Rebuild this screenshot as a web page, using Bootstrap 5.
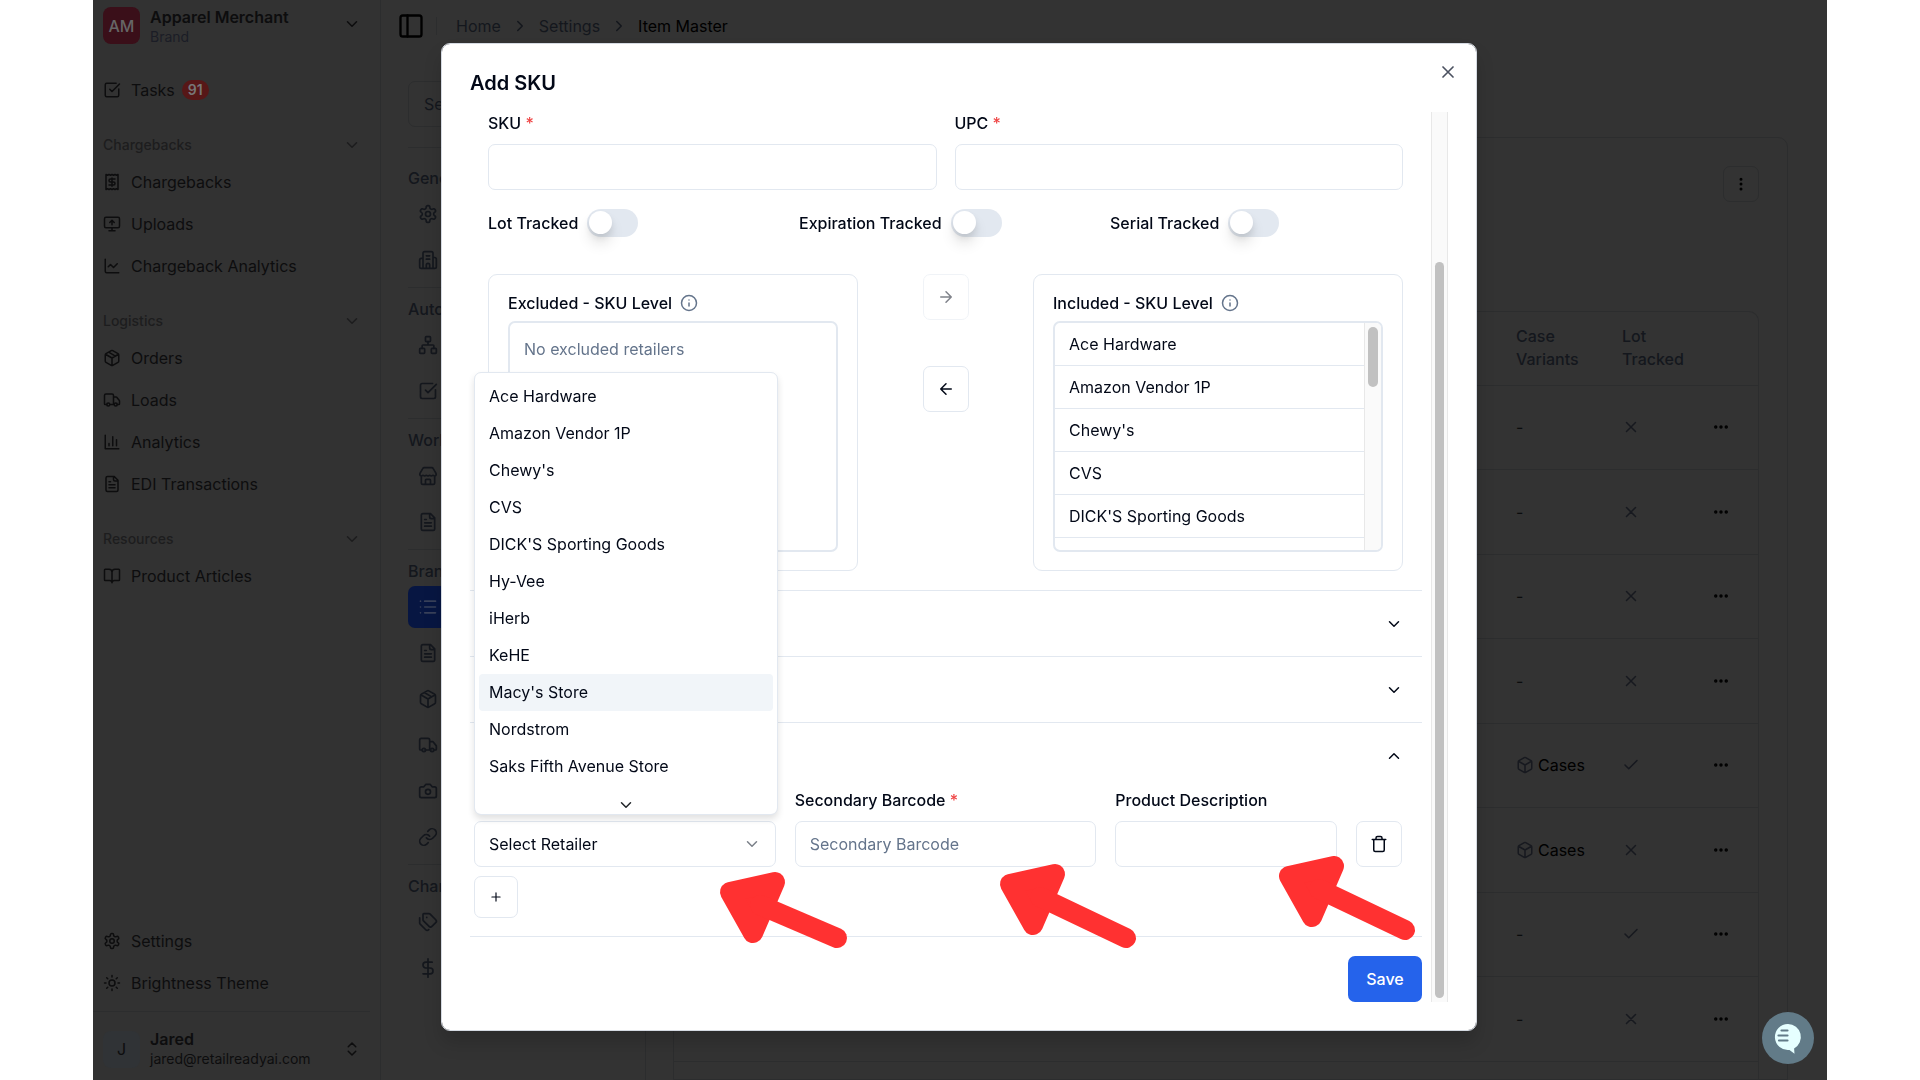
<!DOCTYPE html>
<html lang="en">
<head>
<meta charset="utf-8">
<meta name="viewport" content="width=device-width, initial-scale=1">
<title>Item Master - Add SKU</title>
<link href="https://cdn.jsdelivr.net/npm/bootstrap@5.3.0/dist/css/bootstrap.min.css" rel="stylesheet">
<style>
  :root { --line: #e2e8f0; --ink: #020817; --muted: #64748b; --dim-line: #2c2d2e; --dim-muted: #14171d; }
  body { font-family: Inter, "Liberation Sans", sans-serif; font-size: 16px; line-height: 22px; color: var(--ink); background: #fff; }
  a { color: inherit; text-decoration: none; }
  svg.ico { width: 18px; height: 18px; flex: none; fill: none; stroke: currentColor; stroke-width: 2; stroke-linecap: round; stroke-linejoin: round; display: block; }
  svg.ico-sm { width: 14px; height: 14px; }
  svg.ico-lg { width: 20px; height: 20px; }
  svg.ico-xl { width: 28px; height: 28px; }
  .page-frame { height: 100vh; padding: 0 93px; }
  .app-shell { background: #333; color: #000; }

  /* sidebar */
  .side { width: 288px; background: #323232; border-right: 1px solid var(--dim-line); color: #0d0d0e; }
  .side-top { padding: 7px 19px 0 10px; height: 69px; gap: 10px; }
  .tile { width: 37px; height: 37px; border-radius: 8px; flex: none; }
  .tile-brand { background: #3a0f19; color: #666; font-weight: 500; }
  .tile-user { background: #303336; }
  .small-line { font-size: 14px; line-height: 20px; }
  .role-line { color: #1b1d26; }
  .side-link { height: 42px; padding: 0 10px; gap: 10px; }
  .side-label { height: 32px; margin-top: 18px; padding: 0 19px 0 10px; font-size: 14px; font-weight: 500; color: #1d1d1e; background: none; border: 0; }
  .task-name { gap: 7px; }
  .count-pill { background: #571717; color: #777; font-size: 14px; line-height: 20px; font-weight: 600; padding: 0 6px; border-radius: 10px; }
  .side-foot { margin: 7px 10px 0 0; border-top: 1px solid var(--dim-line); padding: 17px 9px 11px 10px; gap: 10px; }

  /* header and settings navigation */
  .crumbs { height: 51px; padding-left: 16px; color: var(--dim-muted); }
  .crumbs nav { gap: 10px; }
  .v-rule { width: 1px; height: 18px; background: var(--dim-line); margin: 0 19px 0 11px; }
  .settings-nav { width: 265px; padding: 30px 27px 0; border-right: 1px solid var(--dim-line); color: var(--dim-muted); }
  .dim-input { height: 46px; width: 100%; background: transparent; border: 1px solid var(--dim-line); border-radius: 7px; padding: 0 15px; color: var(--dim-muted); }
  .dim-input::placeholder { color: var(--dim-muted); opacity: 1; }
  .nav-set { border-top: 1px solid var(--dim-line); padding: 8px 0 2px; }
  .nav-set-first { margin-top: 20px; padding-top: 17px; }
  .nav-set-name { line-height: 26px; margin-bottom: 2px; font-weight: 500; }
  .nav-tile { height: 42px; margin-bottom: 4px; padding: 0 10px; border-radius: 7px; }
  .nav-tile.on { background: #071642; color: #39415a; }

  /* table card */
  .main-card { margin: 86px 39px 0 27px; border: 1px solid var(--dim-line); border-radius: 10px 10px 0 0; }
  .dots-btn { width: 36px; height: 36px; margin: 28px 28px 0 0; border: 1px solid var(--dim-line); border-radius: 7px; background: none; color: #000; }
  .sku-wrap { margin: 109px 28px 0 0; border: 1px solid var(--dim-line); border-left: 0; border-radius: 0 10px 0 0; }
  .sku-table { width: 100%; table-layout: fixed; }
  .sku-table th { height: 73px; line-height: 23px; font-weight: 500; color: var(--dim-muted); vertical-align: middle; }
  .sku-table td { height: 84px; color: #0b0c0e; }
  .sku-table tr:nth-child(even) td { height: 85px; }
  .sku-table tbody tr { border-top: 1px solid var(--dim-line); }
  .sku-table .w-case { width: 106px; }
  .sku-table .w-lot { width: 90px; }
  .sku-table .w-more { width: 47px; }
  .sku-table td svg { color: #17191f; }
  .bare { border: 0; padding: 0; background: none; color: inherit; display: block; }
  .sku-table td .more { color: #000; }

  /* dialog */
  .sku-modal { padding-right: 2px; }
  .sku-dialog { max-width: 1036px; margin: 43px auto 0; }
  .sku-sheet { border: 1px solid #d5dae2; border-radius: 9px; padding: 28px; color: var(--ink); box-shadow: 0 12px 18px rgba(0,0,0,.15); }
  .sku-title { font-size: 20px; line-height: 20px; font-weight: 600; margin: 1px 0 19px; }
  .sheet-close { position: absolute; top: 18px; right: 18px; color: #4b5160; }
  .sheet-body { gap: 9px; }
  .track { width: 17px; background: #fafafa; border: 1px solid #e8e8e8; border-width: 0 1px; padding: 150px 3px 4px; flex: none; }
  .thumb { background: #c1c1c1; border-radius: 5px; height: 100%; }
  .inset { padding: 0 19px 0 18px; }
  .cols { gap: 18px; }
  .f-label { font-weight: 500; line-height: 22px; display: block; }
  .f-label + * { margin-top: 10px; }
  .req { color: #ef4444; }
  .f-box { height: 46px; border: 1px solid var(--line); border-radius: 7px; padding: 0 14px; font-size: 16px; color: var(--ink); background: #fff; width: 100%; display: block; }
  .f-box::placeholder { color: var(--muted); opacity: 1; }
  .toggles { margin: 19px 0 37px; }
  .toggle-cell { gap: 9px; }
  .toggle { appearance: none; width: 51px; height: 28px; border-radius: 14px; background: var(--line); margin: 0; flex: none; }
  .toggle::before { content: ""; display: block; width: 23px; height: 23px; margin: 2px; border-radius: 50%; background: #fff; box-shadow: 0 10px 14px rgba(0,0,0,.1), 0 4px 6px rgba(0,0,0,.08); }
  .panel-box { border: 1px solid var(--line); border-radius: 9px; padding: 17px 19px 18px; flex: 1 1 0; }
  .panel-box h3 { font-size: 16px; line-height: 22px; font-weight: 500; margin: 0; }
  .info { color: var(--muted); }
  .list-frame { height: 231px; margin-top: 7px; border: 2px solid var(--line); border-radius: 7px; overflow: hidden; }
  .none-text { padding: 15px 14px; color: var(--muted); }
  .movers { width: 175px; gap: 46px; }
  .sq-btn { width: 46px; height: 46px; border: 1px solid var(--line); border-radius: 7px; background: #fff; color: var(--ink); padding: 0; display: flex; align-items: center; justify-content: center; }
  .sq-btn:disabled { opacity: .5; }
  .inc-item { height: 43px; padding: 0 14px; border-bottom: 1px solid var(--line); display: flex; align-items: center; }
  .track-sm { padding: 4px 3px 0; border-right-width: 0; }
  .track-sm .thumb { height: 60px; }
  .folds { margin-top: 19px; }
  .fold { border-top: 1px solid var(--line); }
  .fold-head { height: 65px; width: 100%; border: 0; background: none; padding: 0 19px; display: flex; align-items: center; justify-content: flex-end; color: var(--ink); }
  .fold-last { margin-top: 1px; padding: 0 20px 18px 4px; border-bottom: 1px solid var(--line); }
  .f-row { gap: 19px; }
  .grow-a { flex: 302 1 0; }
  .grow-b { flex: 222 1 0; }
  .f-select { appearance: none; }
  .sel-arrow { position: absolute; right: 15px; top: 14px; color: #7b8089; pointer-events: none; }
  .plus-btn { width: 44px; height: 42px; margin-top: 9px; }
  .pick-list { display: block; left: 0; bottom: 52px; width: 304px; padding: 5px 4px; margin: 0; border: 1px solid var(--line); border-radius: 7px; box-shadow: 0 4px 7px rgba(0,0,0,.12); font-size: 16px; }
  .pick-list .dropdown-item { height: 37px; line-height: 37px; padding: 0 10px; border-radius: 4px; color: var(--ink); }
  .pick-list .dropdown-item.current { background: #f1f5f9; }
  .pick-more { height: 24px; padding-top: 11px; display: flex; justify-content: center; }
  .pointer { position: absolute; z-index: 1100; fill: #ff3131; stroke: #ff3131; stroke-width: 20; stroke-linejoin: round; stroke-linecap: round; pointer-events: none; overflow: visible; }
  .pointer-a { left: 246px; top: 51px; width: 128px; height: 78px; }
  .pointer-b { left: 205px; top: 43px; width: 137px; height: 84px; }
  .pointer-c { left: 164px; top: 35px; width: 137px; height: 84px; }
  .save-btn { background: #2563eb; color: #fff; font-weight: 500; font-size: 16px; height: 46px; width: 74px; padding: 0; border: 0; border-radius: 7px; margin-top: 19px; }
  .chat { position: fixed; right: 106px; bottom: 16px; width: 52px; height: 52px; border: 0; border-radius: 50%; padding: 0; background: #627b88; z-index: 1060; }
</style>
<script src="https://cdn.jsdelivr.net/npm/bootstrap@5.3.0/dist/js/bootstrap.bundle.min.js"></script>
</head>
<body>

<svg width="0" height="0" class="position-absolute" aria-hidden="true">
  <defs>
    <symbol id="down" viewBox="0 0 24 24"><path d="m6 9 6 6 6-6"/></symbol>
    <symbol id="up" viewBox="0 0 24 24"><path d="m18 15-6-6-6 6"/></symbol>
    <symbol id="next" viewBox="0 0 24 24"><path d="m9 18 6-6-6-6"/></symbol>
    <symbol id="updown" viewBox="0 0 24 24"><path d="m7 15 5 5 5-5M7 9l5-5 5 5"/></symbol>
    <symbol id="task" viewBox="0 0 24 24"><path d="M21 10.5V19a2 2 0 0 1-2 2H5a2 2 0 0 1-2-2V5a2 2 0 0 1 2-2h12.5M9 11l3 3L22 4"/></symbol>
    <symbol id="receipt" viewBox="0 0 24 24"><path d="M4 2v20l2-1 2 1 2-1 2 1 2-1 2 1 2-1 2 1V2l-2 1-2-1-2 1-2-1-2 1-2-1-2 1Z"/><path d="M16 8h-6a2 2 0 1 0 0 4h4a2 2 0 1 1 0 4H8M12 17.5v-11"/></symbol>
    <symbol id="upload" viewBox="0 0 24 24"><path d="m9 10 3-3 3 3M12 13V7M12 17v4M8 21h8"/><rect x="2" y="3" width="20" height="14" rx="2"/></symbol>
    <symbol id="linechart" viewBox="0 0 24 24"><path d="M3 3v16a2 2 0 0 0 2 2h16M19 9l-5 5-4-4-3 3"/></symbol>
    <symbol id="cube" viewBox="0 0 24 24"><path d="M21 8a2 2 0 0 0-1-1.73l-7-4a2 2 0 0 0-2 0l-7 4A2 2 0 0 0 3 8v8a2 2 0 0 0 1 1.73l7 4a2 2 0 0 0 2 0l7-4A2 2 0 0 0 21 16ZM3.3 7l8.7 5 8.7-5M12 22V12"/></symbol>
    <symbol id="package" viewBox="0 0 24 24"><path d="m7.5 4.27 9 5.15M21 8a2 2 0 0 0-1-1.73l-7-4a2 2 0 0 0-2 0l-7 4A2 2 0 0 0 3 8v8a2 2 0 0 0 1 1.73l7 4a2 2 0 0 0 2 0l7-4A2 2 0 0 0 21 16ZM3.3 7l8.7 5 8.7-5M12 22V12"/></symbol>
    <symbol id="truck" viewBox="0 0 24 24"><path d="M14 18V6a2 2 0 0 0-2-2H4a2 2 0 0 0-2 2v11a1 1 0 0 0 1 1h2M15 18H9M19 18h2a1 1 0 0 0 1-1v-3.65a1 1 0 0 0-.22-.624l-3.48-4.35A1 1 0 0 0 17.52 8H14"/><circle cx="17" cy="18" r="2"/><circle cx="7" cy="18" r="2"/></symbol>
    <symbol id="bars" viewBox="0 0 24 24"><path d="M3 3v18h18M18 17V9M13 17V5M8 17v-3"/></symbol>
    <symbol id="file" viewBox="0 0 24 24"><path d="M15 2H6a2 2 0 0 0-2 2v16a2 2 0 0 0 2 2h12a2 2 0 0 0 2-2V7ZM14 2v4a2 2 0 0 0 2 2h4M10 9H8M16 13H8M16 17H8"/></symbol>
    <symbol id="book" viewBox="0 0 24 24"><path d="M12 7v14M3 18a1 1 0 0 1-1-1V4a1 1 0 0 1 1-1h5a4 4 0 0 1 4 4 4 4 0 0 1 4-4h5a1 1 0 0 1 1 1v13a1 1 0 0 1-1 1h-6a3 3 0 0 0-3 3 3 3 0 0 0-3-3z"/></symbol>
    <symbol id="gear" viewBox="0 0 24 24"><path d="M12.22 2h-.44a2 2 0 0 0-2 2v.18a2 2 0 0 1-1 1.73l-.43.25a2 2 0 0 1-2 0l-.15-.08a2 2 0 0 0-2.73.73l-.22.38a2 2 0 0 0 .73 2.73l.15.1a2 2 0 0 1 1 1.72v.51a2 2 0 0 1-1 1.74l-.15.09a2 2 0 0 0-.73 2.73l.22.38a2 2 0 0 0 2.73.73l.15-.08a2 2 0 0 1 2 0l.43.25a2 2 0 0 1 1 1.73V20a2 2 0 0 0 2 2h.44a2 2 0 0 0 2-2v-.18a2 2 0 0 1 1-1.73l.43-.25a2 2 0 0 1 2 0l.15.08a2 2 0 0 0 2.73-.73l.22-.39a2 2 0 0 0-.73-2.73l-.15-.08a2 2 0 0 1-1-1.74v-.5a2 2 0 0 1 1-1.74l.15-.09a2 2 0 0 0 .73-2.73l-.22-.38a2 2 0 0 0-2.73-.73l-.15.08a2 2 0 0 1-2 0l-.43-.25a2 2 0 0 1-1-1.73V4a2 2 0 0 0-2-2z"/><circle cx="12" cy="12" r="3"/></symbol>
    <symbol id="sun" viewBox="0 0 24 24"><circle cx="12" cy="12" r="4"/><path d="M12 2v2M12 20v2M4.93 4.93l1.41 1.41M17.66 17.66l1.41 1.41M2 12h2M20 12h2M6.34 17.66l-1.41 1.41M19.07 4.93l-1.41 1.41"/></symbol>
    <symbol id="panel" viewBox="0 0 24 24"><rect x="3" y="3" width="18" height="18" rx="2"/><path d="M9 3v18"/></symbol>
    <symbol id="building" viewBox="0 0 24 24"><path d="M6 22V4a2 2 0 0 1 2-2h8a2 2 0 0 1 2 2v18M6 10H4a2 2 0 0 0-2 2v8a2 2 0 0 0 2 2h16a2 2 0 0 0 2-2v-9a2 2 0 0 0-2-2h-2M10 7h4M10 11h4M10 22v-4a2 2 0 0 1 4 0v4"/></symbol>
    <symbol id="network" viewBox="0 0 24 24"><rect x="16" y="16" width="6" height="6" rx="1"/><rect x="2" y="16" width="6" height="6" rx="1"/><rect x="9" y="2" width="6" height="6" rx="1"/><path d="M5 16v-3a1 1 0 0 1 1-1h12a1 1 0 0 1 1 1v3M12 12V8"/></symbol>
    <symbol id="store" viewBox="0 0 24 24"><path d="M4 12v8a2 2 0 0 0 2 2h12a2 2 0 0 0 2-2v-8M15 22v-5a1 1 0 0 0-1-1h-4a1 1 0 0 0-1 1v5M2.5 8.5l3.2-5.4A2 2 0 0 1 7.5 2h9a2 2 0 0 1 1.8 1.1l3.2 5.4c.9 1.7-.1 3.5-1.5 3.5a2.7 2.7 0 0 1-1.59-.63.7.7 0 0 0-.82 0A2.7 2.7 0 0 1 16 12a2.7 2.7 0 0 1-1.59-.63.7.7 0 0 0-.82 0A2.7 2.7 0 0 1 12 12a2.7 2.7 0 0 1-1.59-.63.7.7 0 0 0-.82 0A2.7 2.7 0 0 1 8 12a2.7 2.7 0 0 1-1.59-.63.7.7 0 0 0-.82 0A2.7 2.7 0 0 1 4 12c-1.4 0-2.4-1.8-1.5-3.5Z"/></symbol>
    <symbol id="list" viewBox="0 0 24 24"><path d="M8 5h13M8 12h13M8 19h13M3 5h.01M3 12h.01M3 19h.01"/></symbol>
    <symbol id="camera" viewBox="0 0 24 24"><path d="M14.5 4h-5L7 7H4a2 2 0 0 0-2 2v9a2 2 0 0 0 2 2h16a2 2 0 0 0 2-2V9a2 2 0 0 0-2-2h-3l-2.5-3z"/><circle cx="12" cy="13" r="3"/></symbol>
    <symbol id="chain" viewBox="0 0 24 24"><path d="M10 13a5 5 0 0 0 7.54.54l3-3a5 5 0 0 0-7.07-7.07l-1.72 1.71M14 11a5 5 0 0 0-7.54-.54l-3 3a5 5 0 0 0 7.07 7.07l1.71-1.71"/></symbol>
    <symbol id="tags" viewBox="0 0 24 24"><path d="M13.17 2H7a1 1 0 0 0-1 1v6.17a2 2 0 0 0 .59 1.42l6.7 6.7a2.43 2.43 0 0 0 3.42 0l4.58-4.58a2.43 2.43 0 0 0 0-3.42l-6.7-6.7A2 2 0 0 0 13.17 2ZM2 7v6.17a2 2 0 0 0 .59 1.42l6.7 6.7a2.4 2.4 0 0 0 3.42 0l.19-.19M10.5 6.5h.01"/></symbol>
    <symbol id="dollar" viewBox="0 0 24 24"><path d="M12 1v22M17 5H9.5a3.5 3.5 0 0 0 0 7h5a3.5 3.5 0 0 1 0 7H6"/></symbol>
    <symbol id="cross" viewBox="0 0 24 24"><path d="M18 6 6 18M6 6l12 12"/></symbol>
    <symbol id="tick" viewBox="0 0 24 24"><path d="M20 6 9 17l-5-5"/></symbol>
    <symbol id="more" viewBox="0 0 24 24"><circle cx="12" cy="12" r="1.3"/><circle cx="19" cy="12" r="1.3"/><circle cx="5" cy="12" r="1.3"/></symbol>
    <symbol id="morev" viewBox="0 0 24 24"><circle cx="12" cy="12" r="1"/><circle cx="12" cy="5.500" r="1"/><circle cx="12" cy="18.500" r="1"/></symbol>
    <symbol id="info" viewBox="0 0 24 24"><circle cx="12" cy="12" r="10"/><path d="M12 16v-4M12 8h.01"/></symbol>
    <symbol id="right" viewBox="0 0 24 24"><path d="M5 12h14M12 5l7 7-7 7"/></symbol>
    <symbol id="left" viewBox="0 0 24 24"><path d="M19 12H5M12 19l-7-7 7-7"/></symbol>
    <symbol id="plus" viewBox="0 0 24 24"><path d="M5 12h14M12 5v14"/></symbol>
    <symbol id="trash" viewBox="0 0 24 24"><path d="M3 6h18M19 6v14a2 2 0 0 1-2 2H7a2 2 0 0 1-2-2V6M8 6V4a2 2 0 0 1 2-2h4a2 2 0 0 1 2 2v2"/></symbol>
  </defs>
</svg>

<div class="page-frame">
  <div class="app-shell d-flex h-100 overflow-hidden">

    <aside class="side d-flex flex-column flex-shrink-0">
      <div class="side-top d-flex">
        <span class="tile tile-brand d-flex align-items-center justify-content-center">AM</span>
        <div class="flex-grow-1 d-flex flex-column">
          <span class="fw-semibold lh-sm">Apparel Merchant</span>
          <span class="small-line role-line">Brand</span>
        </div>
        <svg class="ico mt-2"><use href="#down"/></svg>
      </div>
      <a href="#" class="side-link d-flex align-items-center"><svg class="ico"><use href="#task"/></svg><span class="task-name d-flex align-items-center">Tasks<span class="count-pill">91</span></span></a>

      <button class="side-label d-flex align-items-center justify-content-between">Chargebacks<svg class="ico"><use href="#down"/></svg></button>
      <a href="#" class="side-link d-flex align-items-center"><svg class="ico"><use href="#receipt"/></svg>Chargebacks</a>
      <a href="#" class="side-link d-flex align-items-center"><svg class="ico"><use href="#upload"/></svg>Uploads</a>
      <a href="#" class="side-link d-flex align-items-center"><svg class="ico"><use href="#linechart"/></svg>Chargeback Analytics</a>

      <button class="side-label d-flex align-items-center justify-content-between">Logistics<svg class="ico"><use href="#down"/></svg></button>
      <a href="#" class="side-link d-flex align-items-center"><svg class="ico"><use href="#package"/></svg>Orders</a>
      <a href="#" class="side-link d-flex align-items-center"><svg class="ico"><use href="#truck"/></svg>Loads</a>
      <a href="#" class="side-link d-flex align-items-center"><svg class="ico"><use href="#bars"/></svg>Analytics</a>
      <a href="#" class="side-link d-flex align-items-center"><svg class="ico"><use href="#file"/></svg>EDI Transactions</a>

      <button class="side-label d-flex align-items-center justify-content-between">Resources<svg class="ico"><use href="#down"/></svg></button>
      <a href="#" class="side-link d-flex align-items-center"><svg class="ico"><use href="#book"/></svg>Product Articles</a>

      <div class="mt-auto">
        <a href="#" class="side-link d-flex align-items-center"><svg class="ico"><use href="#gear"/></svg>Settings</a>
        <a href="#" class="side-link d-flex align-items-center"><svg class="ico"><use href="#sun"/></svg>Brightness Theme</a>
        <div class="side-foot d-flex align-items-center">
          <span class="tile tile-user d-flex align-items-center justify-content-center">J</span>
          <div class="flex-grow-1 d-flex flex-column">
            <span class="fw-semibold lh-sm">Jared</span>
            <span class="small-line">jared@retailreadyai.com</span>
          </div>
          <svg class="ico"><use href="#updown"/></svg>
        </div>
      </div>
    </aside>

    <main class="flex-grow-1 d-flex flex-column">
      <header class="crumbs d-flex align-items-center flex-shrink-0">
        <button class="bare text-black" aria-label="Toggle sidebar"><svg class="ico ico-xl"><use href="#panel"/></svg></button>
        <span class="v-rule"></span>
        <nav class="d-flex align-items-center">
          <a href="#">Home</a><svg class="ico"><use href="#next"/></svg>
          <a href="#">Settings</a><svg class="ico"><use href="#next"/></svg>
          <span class="text-black">Item Master</span>
        </nav>
      </header>

      <div class="d-flex flex-grow-1 overflow-hidden">
        <nav class="settings-nav flex-shrink-0">
          <input class="dim-input" type="search" placeholder="Search" aria-label="Search settings">
          <div class="nav-set nav-set-first">
            <div class="nav-set-name">General</div>
            <a href="#" class="nav-tile d-flex align-items-center"><svg class="ico ico-lg"><use href="#gear"/></svg></a>
            <a href="#" class="nav-tile d-flex align-items-center"><svg class="ico ico-lg"><use href="#building"/></svg></a>
          </div>
          <div class="nav-set">
            <div class="nav-set-name">Automation</div>
            <a href="#" class="nav-tile d-flex align-items-center"><svg class="ico ico-lg"><use href="#network"/></svg></a>
            <a href="#" class="nav-tile d-flex align-items-center"><svg class="ico ico-lg"><use href="#task"/></svg></a>
          </div>
          <div class="nav-set">
            <div class="nav-set-name">Workspace</div>
            <a href="#" class="nav-tile d-flex align-items-center"><svg class="ico ico-lg"><use href="#store"/></svg></a>
            <a href="#" class="nav-tile d-flex align-items-center"><svg class="ico ico-lg"><use href="#file"/></svg></a>
          </div>
          <div class="nav-set">
            <div class="nav-set-name">Brand</div>
            <a href="#" class="nav-tile on d-flex align-items-center"><svg class="ico ico-lg"><use href="#list"/></svg></a>
            <a href="#" class="nav-tile d-flex align-items-center"><svg class="ico ico-lg"><use href="#file"/></svg></a>
            <a href="#" class="nav-tile d-flex align-items-center"><svg class="ico ico-lg"><use href="#package"/></svg></a>
            <a href="#" class="nav-tile d-flex align-items-center"><svg class="ico ico-lg"><use href="#truck"/></svg></a>
            <a href="#" class="nav-tile d-flex align-items-center"><svg class="ico ico-lg"><use href="#camera"/></svg></a>
            <a href="#" class="nav-tile d-flex align-items-center"><svg class="ico ico-lg"><use href="#chain"/></svg></a>
          </div>
          <div class="nav-set">
            <div class="nav-set-name">Chargebacks</div>
            <a href="#" class="nav-tile d-flex align-items-center"><svg class="ico ico-lg"><use href="#tags"/></svg></a>
            <a href="#" class="nav-tile d-flex align-items-center"><svg class="ico ico-lg"><use href="#dollar"/></svg></a>
          </div>
        </nav>

        <section class="main-card flex-grow-1">
          <div class="d-flex justify-content-end">
            <button class="dots-btn d-flex align-items-center justify-content-center p-0" aria-label="Table options"><svg class="ico"><use href="#morev"/></svg></button>
          </div>
          <div class="sku-wrap">
            <table class="sku-table">
              <thead><tr><th></th><th class="w-case">Case<br>Variants</th><th class="w-lot">Lot<br>Tracked</th><th class="w-more"></th></tr></thead>
              <tbody id="skuRows"></tbody>
            </table>
          </div>
        </section>
      </div>
    </main>
  </div>
</div>

<div class="modal sku-modal d-block" role="dialog" aria-labelledby="dlgTitle">
  <div class="modal-dialog sku-dialog">
    <form class="modal-content sku-sheet">
      <h2 class="sku-title" id="dlgTitle">Add SKU</h2>
      <button type="button" class="bare sheet-close" aria-label="Close"><svg class="ico ico-lg"><use href="#cross"/></svg></button>

      <div class="sheet-body d-flex">
        <div class="flex-grow-1">
          <div class="inset">
            <div class="cols d-flex">
              <div class="flex-fill"><label class="f-label" for="sku">SKU <span class="req">*</span></label><input class="f-box" id="sku" type="text"></div>
              <div class="flex-fill"><label class="f-label" for="upc">UPC <span class="req">*</span></label><input class="f-box" id="upc" type="text"></div>
            </div>

            <div class="toggles cols d-flex">
              <div class="col toggle-cell d-flex align-items-center"><label class="f-label" for="lot">Lot Tracked</label><input class="toggle mt-0" type="checkbox" role="switch" id="lot"></div>
              <div class="col toggle-cell d-flex align-items-center"><label class="f-label" for="exp">Expiration Tracked</label><input class="toggle mt-0" type="checkbox" role="switch" id="exp"></div>
              <div class="col toggle-cell d-flex align-items-center"><label class="f-label" for="ser">Serial Tracked</label><input class="toggle mt-0" type="checkbox" role="switch" id="ser"></div>
            </div>

            <div class="d-flex">
              <section class="panel-box">
                <div class="d-flex align-items-center gap-2"><h3>Excluded - SKU Level</h3><svg class="ico info"><use href="#info"/></svg></div>
                <div class="list-frame"><div class="none-text">No excluded retailers</div></div>
              </section>
              <div class="movers d-flex flex-column align-items-center">
                <button type="button" class="sq-btn" disabled aria-label="Include"><svg class="ico"><use href="#right"/></svg></button>
                <button type="button" class="sq-btn" aria-label="Exclude"><svg class="ico"><use href="#left"/></svg></button>
              </div>
              <section class="panel-box">
                <div class="d-flex align-items-center gap-2"><h3>Included - SKU Level</h3><svg class="ico info"><use href="#info"/></svg></div>
                <div class="list-frame d-flex">
                  <ul class="list-unstyled mb-0 flex-grow-1">
                    <li class="inc-item">Ace Hardware</li>
                    <li class="inc-item">Amazon Vendor 1P</li>
                    <li class="inc-item">Chewy's</li>
                    <li class="inc-item">CVS</li>
                    <li class="inc-item">DICK'S Sporting Goods</li>
                  </ul>
                  <div class="track track-sm"><div class="thumb"></div></div>
                </div>
              </section>
            </div>
          </div>

          <div class="folds">
            <div class="fold"><button type="button" class="fold-head" aria-label="Expand section"><svg class="ico"><use href="#down"/></svg></button></div>
            <div class="fold"><button type="button" class="fold-head" aria-label="Expand section"><svg class="ico"><use href="#down"/></svg></button></div>
            <div class="fold"><button type="button" class="fold-head" aria-label="Collapse section"><svg class="ico"><use href="#up"/></svg></button></div>
          </div>

          <div class="fold-last">
            <div class="f-row d-flex align-items-end">
              <div class="grow-a position-relative">
                <select class="f-box f-select" aria-label="Retailer"><option>Select Retailer</option></select>
                <svg class="ico sel-arrow"><use href="#down"/></svg>
                <ul class="dropdown-menu pick-list">
                  <li><a class="dropdown-item" href="#">Ace Hardware</a></li>
                  <li><a class="dropdown-item" href="#">Amazon Vendor 1P</a></li>
                  <li><a class="dropdown-item" href="#">Chewy's</a></li>
                  <li><a class="dropdown-item" href="#">CVS</a></li>
                  <li><a class="dropdown-item" href="#">DICK'S Sporting Goods</a></li>
                  <li><a class="dropdown-item" href="#">Hy-Vee</a></li>
                  <li><a class="dropdown-item" href="#">iHerb</a></li>
                  <li><a class="dropdown-item" href="#">KeHE</a></li>
                  <li><a class="dropdown-item current" href="#">Macy's Store</a></li>
                  <li><a class="dropdown-item" href="#">Nordstrom</a></li>
                  <li><a class="dropdown-item" href="#">Saks Fifth Avenue Store</a></li>
                  <li class="pick-more"><svg class="ico"><use href="#down"/></svg></li>
                </ul>
                <svg class="pointer pointer-a" viewBox="0 0 128 78"><path d="M10 20 55 10 33 61Z"/><path d="M40 33 117 66"/></svg>
              </div>
              <div class="grow-a">
                <label class="f-label" for="bar2">Secondary Barcode <span class="req">*</span></label>
                <div class="position-relative">
                  <input class="f-box" id="bar2" type="text" placeholder="Secondary Barcode">
                  <svg class="pointer pointer-b" viewBox="0 0 137 84"><path d="M10 20 55 10 33 61Z"/><path d="M40 33 126 74"/></svg>
                </div>
              </div>
              <div class="grow-b">
                <label class="f-label" for="desc">Product Description</label>
                <div class="position-relative">
                  <input class="f-box" id="desc" type="text">
                  <svg class="pointer pointer-c" viewBox="0 0 137 84"><path d="M10 20 55 10 33 61Z"/><path d="M40 33 126 74"/></svg>
                </div>
              </div>
              <button type="button" class="sq-btn flex-shrink-0" aria-label="Delete"><svg class="ico"><use href="#trash"/></svg></button>
            </div>
            <button type="button" class="sq-btn plus-btn" aria-label="Add barcode"><svg class="ico ico-sm"><use href="#plus"/></svg></button>
          </div>

          <div class="d-flex justify-content-end"><button type="submit" class="btn save-btn">Save</button></div>
        </div>
        <div class="track"><div class="thumb"></div></div>
      </div>
    </form>
  </div>
</div>

<button class="chat" aria-label="Open chat">
  <svg width="52" height="52" viewBox="0 0 52 52"><path d="M26 12a13 13 0 1 0 1.5 25.900l5 3.800-.4-5.300A13 13 0 0 0 26 12Z" fill="#e6ffff"/><path d="M19.500 18.500h6M16.500 23.500h9M17 28.500h8.500" stroke="#627b88" stroke-width="2.200" stroke-linecap="round"/></svg>
</button>

<script>
  // one entry per SKU: has case variants, is lot tracked
  const rows = [[0,0],[0,0],[0,0],[0,0],[1,1],[1,0],[0,1],[0,0]];
  document.getElementById('skuRows').innerHTML = rows.map(([cases, lot]) => `<tr><td></td>
    <td>${cases ? '<span class="d-flex align-items-center gap-1 text-black"><svg class="ico"><use href="#cube"/></svg>Cases</span>' : '-'}</td>
    <td><svg class="ico"><use href="#${lot ? 'tick' : 'cross'}"/></svg></td>
    <td><button class="bare" aria-label="Row actions"><svg class="ico more"><use href="#more"/></svg></button></td></tr>`).join('') + '<tr><td colspan="4"></td></tr>';
</script>
</body>
</html>
